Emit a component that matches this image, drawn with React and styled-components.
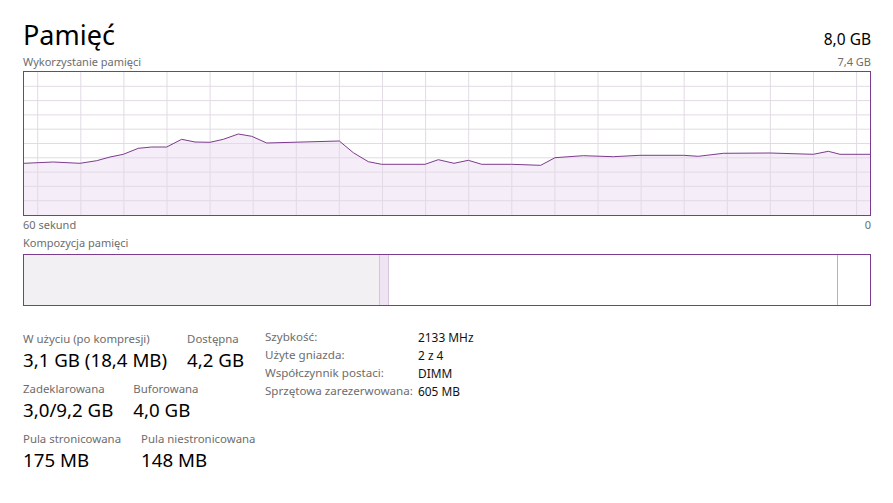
import React from 'react';
import styled, { createGlobalStyle } from 'styled-components';

const GlobalStyle = createGlobalStyle`
  html, body {
    margin: 0;
    padding: 0;
    background: #ffffff;
  }
  body {
    font-family: 'Segoe UI', 'Noto Sans', sans-serif;
    color: #000;
  }
`;

const PURPLE = '#7c3c8e';

const Page = styled.div`
  width: 848px;
  padding: 17px 22px 0 23px;
`;

const HeaderRow = styled.div`
  display: flex;
  justify-content: space-between;
  align-items: baseline;
  height: 36px;
`;

const Title = styled.h1`
  margin: 0;
  font-size: 27px;
  font-weight: 400;
  line-height: 36px;
`;

const Capacity = styled.div`
  font-size: 15.5px;
  line-height: 20px;
`;

const AxisRow = styled.div`
  display: flex;
  justify-content: space-between;
  font-size: 11px;
  line-height: 18px;
  color: #6d6d6d;
`;

const ChartBox = styled.div`
  box-sizing: border-box;
  height: 145px;
  border: 1px solid ${PURPLE};
  background: #fff;

  svg {
    display: block;
    width: 100%;
    height: 100%;
  }
`;

const CompBox = styled.div`
  box-sizing: border-box;
  height: 52px;
  margin-top: 2px;
  border: 1px solid ${PURPLE};
  display: flex;
`;

const Segment = styled.div`
  width: ${p => (p.$w ? `${p.$w}px` : 'auto')};
  flex: ${p => (p.$w ? 'none' : '1')};
  background: ${p => p.$bg};
  border-right: ${p => (p.$edge ? `1px solid ${p.$edge}` : 'none')};
`;

const Stats = styled.div`
  display: flex;
  margin-top: 26px;
`;

const LeftStats = styled.div`
  width: 219px;
  display: flex;
  flex-direction: column;
  gap: 8px;
`;

const StatRow = styled.div`
  display: flex;
  gap: 20px;
`;

const StatItem = styled.div`
  display: flex;
  flex-direction: column;
`;

const StatLabel = styled.div`
  font-size: 11.4px;
  line-height: 14px;
  color: #6d6d6d;
  white-space: nowrap;
`;

const StatValue = styled.div`
  font-size: 18.7px;
  line-height: 28px;
  white-space: nowrap;
`;

const InfoGrid = styled.div`
  margin-left: 23px;
  margin-top: -4px;
  display: grid;
  grid-template-columns: 153px auto;
  grid-auto-rows: 18px;
  line-height: 18px;
`;

const InfoKey = styled.div`
  font-size: 11.6px;
  color: #6d6d6d;
  white-space: nowrap;
`;

const InfoVal = styled.div`
  font-size: 11.9px;
  color: #111;
  white-space: nowrap;
`;

const points = [
  [0, 91.3], [29.3, 90], [56, 91.3], [72.7, 88.7], [86, 85], [99.3, 82.3],
  [114.3, 76.3], [127.7, 75], [142.7, 75], [157.7, 67.3], [171, 70], [186, 70.3],
  [199.3, 67.3], [214.3, 62], [227.7, 64.3], [242.7, 71], [315.3, 69], [329.3, 80.7],
  [344.3, 89.7], [357.7, 92.3], [401, 92.3], [414.3, 87.7], [430, 91.3], [444.3, 88.3],
  [457.7, 92.3], [487.7, 92.3], [516.7, 93.3], [531, 85.7], [559.3, 83.7], [589.3, 84.7],
  [616, 83.3], [659.3, 83.3], [674.3, 84.3], [699.3, 81.3], [746, 81], [789.3, 82.3],
  [804.3, 79.3], [816, 82.3], [846, 82.3],
];

const W = 846;
const H = 143;

const UsageChart = () => {
  const line = points.map(p => p.join(',')).join(' ');
  const area = `0,${H} ${line} ${W},${H}`;
  const vLines = Array.from({ length: 20 }, (_, k) => 13.7 + 43.1 * k);
  const hLines = Array.from({ length: 9 }, (_, i) => 14.3 * (i + 1));
  return (
    <svg viewBox={`0 0 ${W} ${H}`} preserveAspectRatio="none">
      <polygon points={area} fill="#f5edf7" />
      {hLines.map(y => (
        <line key={'h' + y} x1="0" x2={W} y1={y} y2={y} stroke="#e2dae4" strokeWidth="1" />
      ))}
      {vLines.map(x => (
        <line key={'v' + x} x1={x} x2={x} y1="0" y2={H} stroke="#e2dae4" strokeWidth="1" />
      ))}
      <polyline points={line} fill="none" stroke={PURPLE} strokeWidth="1" />
    </svg>
  );
};

const statRows = [
  [
    { label: 'W użyciu (po kompresji)', value: '3,1 GB (18,4 MB)' },
    { label: 'Dostępna', value: '4,2 GB' },
  ],
  [
    { label: 'Zadeklarowana', value: '3,0/9,2 GB' },
    { label: 'Buforowana', value: '4,0 GB' },
  ],
  [
    { label: 'Pula stronicowana', value: '175 MB' },
    { label: 'Pula niestronicowana', value: '148 MB' },
  ],
];

const info = [
  ['Szybkość:', '2133 MHz'],
  ['Użyte gniazda:', '2 z 4'],
  ['Współczynnik postaci:', 'DIMM'],
  ['Sprzętowa zarezerwowana:', '605 MB'],
];

export default function App() {
  return (
    <Page>
      <GlobalStyle />
      <HeaderRow>
        <Title>Pamięć</Title>
        <Capacity>8,0 GB</Capacity>
      </HeaderRow>
      <AxisRow>
        <span>Wykorzystanie pamięci</span>
        <span>7,4 GB</span>
      </AxisRow>
      <ChartBox>
        <UsageChart />
      </ChartBox>
      <AxisRow>
        <span>60 sekund</span>
        <span>0</span>
      </AxisRow>
      <AxisRow>
        <span>Kompozycja pamięci</span>
      </AxisRow>
      <CompBox>
        <Segment $w={355} $bg="#f2f0f3" $edge="#d9c3df" />
        <Segment $w={8} $bg="#efe4f2" $edge="#d9c3df" />
        <Segment $w={448} $bg="#ffffff" $edge="#b5b5b5" />
        <Segment $bg="#ffffff" />
      </CompBox>
      <Stats>
        <LeftStats>
          {statRows.map((row, i) => (
            <StatRow key={i}>
              {row.map(item => (
                <StatItem key={item.label}>
                  <StatLabel>{item.label}</StatLabel>
                  <StatValue>{item.value}</StatValue>
                </StatItem>
              ))}
            </StatRow>
          ))}
        </LeftStats>
        <InfoGrid>
          {info.map(([k, v]) => (
            <React.Fragment key={k}>
              <InfoKey>{k}</InfoKey>
              <InfoVal>{v}</InfoVal>
            </React.Fragment>
          ))}
        </InfoGrid>
      </Stats>
    </Page>
  );
}
